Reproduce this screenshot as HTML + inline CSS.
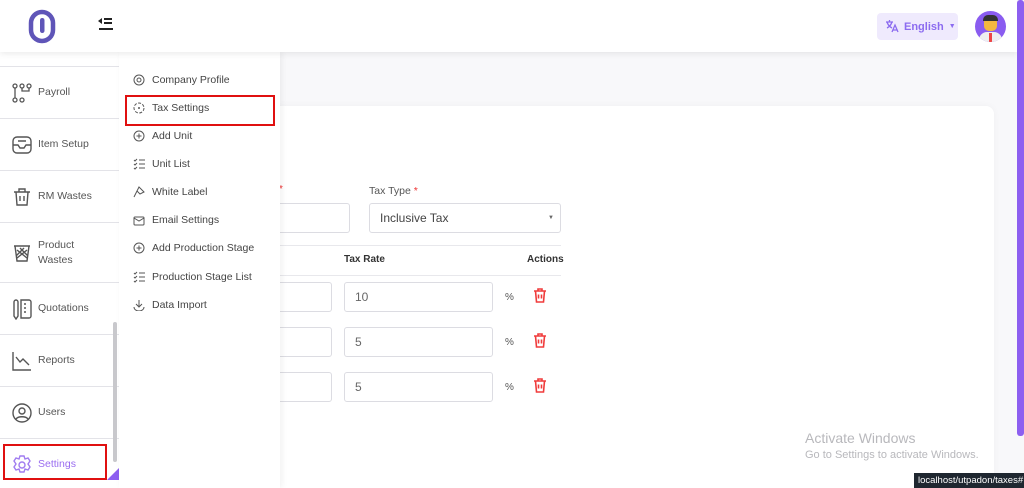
<!DOCTYPE html>
<html><head><meta charset="utf-8"><style>
*{box-sizing:border-box;margin:0;padding:0}
html{width:1024px;height:488px;overflow:hidden}
body{width:1024px;height:488px;overflow:hidden;background:#f8f8fa;font-family:"Liberation Sans",sans-serif;position:relative;color:#444}
.hdr{position:absolute;left:0;top:0;width:1017px;height:52px;background:#fff;box-shadow:0 2px 6px rgba(0,0,0,.08);z-index:5}
.side{position:absolute;left:0;top:52px;width:119px;height:436px;background:#fff;z-index:3}
.item{position:absolute;left:0;width:119px;border-top:1px solid #e3e3e8;font-size:10.5px;color:#555;display:flex;align-items:center}
.item svg{position:absolute;left:12px}
.item span{position:absolute;left:38px;line-height:15px}
.sub{position:absolute;left:119px;top:52px;width:161px;height:436px;background:#fff;box-shadow:2px 0 6px rgba(0,0,0,.06);z-index:4}
.si{position:absolute;left:14px;font-size:10.5px;color:#444;display:flex;align-items:center;gap:7px;white-space:nowrap}
.si svg{width:12px;height:12px}
.card{position:absolute;left:270px;top:106px;width:724px;height:382px;background:#fff;border-radius:8px 8px 0 0;box-shadow:0 0 8px rgba(0,0,0,.04)}
.inp{position:absolute;border:1px solid #dcdce2;border-radius:3px;background:#fff;font-size:12px;color:#666;padding-left:10px;display:flex;align-items:center}
.lbl{position:absolute;font-size:10.5px;color:#555}
.pct{position:absolute;left:505px;font-size:10px;color:#555}
.tr{position:absolute;left:533px}
</style></head><body>
<div class="hdr">
 <svg style="position:absolute;left:28px;top:9px" width="28" height="35" viewBox="0 0 28 35"><rect x="3" y="3" width="22" height="29" rx="11" fill="none" stroke="#5f55b8" stroke-width="4.5"/><rect x="12" y="9" width="4.5" height="15" rx="2.2" fill="#5f55b8"/></svg>
 <svg style="position:absolute;left:98px;top:17px" width="16" height="14" viewBox="0 0 16 14"><path d="M0 4l4-3v6z" fill="#222"/><path d="M6 2h8M6 6h8M1 12h14" stroke="#222" stroke-width="2"/></svg>
 <div style="position:absolute;left:877px;top:13px;width:81px;height:27px;background:#efeafd;border-radius:4px;color:#8c6cf0;font-size:11px;font-weight:bold;display:flex;align-items:center;padding-left:8px;gap:5px;white-space:nowrap"><svg width="14" height="13" viewBox="0 0 14 13" fill="none" stroke="#8c6cf0" stroke-width="1.3"><path d="M1 2h7M4.5 0v2M2 2c1 3 3 5 5 6M7 2c-1 3-3 5-5 6M7 12l3-7 3 7M8 10h4"/></svg>English <span style="font-size:7px">▼</span></div>
 <div style="position:absolute;left:975px;top:11px;width:31px;height:31px;border-radius:50%;background:#8a5cf0;overflow:hidden"><div style="position:absolute;left:9px;top:6px;width:13px;height:14px;border-radius:5px;background:#f4b840"></div><div style="position:absolute;left:8px;top:4px;width:15px;height:6px;border-radius:5px 5px 0 0;background:#333"></div><div style="position:absolute;left:4px;top:21px;width:23px;height:12px;border-radius:8px 8px 0 0;background:#eee"></div><div style="position:absolute;left:14px;top:22px;width:3px;height:9px;background:#e44"></div></div>
</div>
<div style="position:absolute;left:1017px;top:0;width:7px;height:436px;background:#8d5ff0;border-radius:3px;z-index:6"></div>
<div class="side">
 <div class="item" style="top:14px;height:52px"><svg width="20" height="20" viewBox="0 0 20 20" fill="none" stroke="#555" stroke-width="1.3"><circle cx="3" cy="3" r="2"/><circle cx="10" cy="3" r="2"/><circle cx="17" cy="3" r="2"/><path d="M3 5v10M10 5v3H17V5"/><circle cx="3" cy="17" r="2"/><circle cx="10" cy="17" r="2"/></svg><span>Payroll</span></div>
 <div class="item" style="top:66px;height:52px"><svg width="20" height="20" viewBox="0 0 20 20" fill="none" stroke="#555" stroke-width="1.4"><rect x="1" y="2" width="18" height="16" rx="4"/><path d="M1 10h5l2 3h4l2-3h5M6 6h8"/></svg><span>Item Setup</span></div>
 <div class="item" style="top:118px;height:52px"><svg width="20" height="20" viewBox="0 0 20 20" fill="none" stroke="#555" stroke-width="1.4"><path d="M2 5h16M7 5V2h6v3M4 5l1 13h10l1-13M8 9v5M12 9v5"/></svg><span>RM Wastes</span></div>
 <div class="item" style="top:170px;height:60px"><svg width="20" height="20" viewBox="0 0 20 20" fill="none" stroke="#555" stroke-width="1.4"><path d="M2 3h16M3 3l2 15h10l2-15M5 7l10 8M15 7L5 15M8 5l8 8M12 5l-8 8"/></svg><span>Product<br>Wastes</span></div>
 <div class="item" style="top:230px;height:52px"><svg width="20" height="22" viewBox="0 0 20 22" fill="none" stroke="#555" stroke-width="1.4"><path d="M2 4a2 2 0 014 0v14l-2 3-2-3zM9 2h8a2 2 0 012 2v14a2 2 0 01-2 2H9zM12 6h2M12 10h2M12 14h2"/></svg><span>Quotations</span></div>
 <div class="item" style="top:282px;height:52px"><svg width="20" height="20" viewBox="0 0 20 20" fill="none" stroke="#555" stroke-width="1.4"><path d="M1 1v18h18M4 6l4 5 3-3 6 6"/></svg><span>Reports</span></div>
 <div class="item" style="top:334px;height:52px"><svg width="20" height="20" viewBox="0 0 20 20" fill="none" stroke="#555" stroke-width="1.4"><circle cx="10" cy="10" r="9"/><circle cx="10" cy="8" r="3"/><path d="M4 16c2-3 10-3 12 0"/></svg><span>Users</span></div>
 <div class="item" style="top:386px;height:52px;color:#9a6cf0"><svg width="20" height="20" viewBox="0 0 20 20" fill="none" stroke="#a07cf0" stroke-width="1.4"><circle cx="10" cy="10" r="3"/><path d="M8 1h4l1 3 3-1 2 3-2 3 2 3-2 3-3-1-1 3H8l-1-3-3 1-2-3 2-3-2-3 2-3 3 1z"/></svg><span>Settings</span></div>
 <div style="position:absolute;left:3px;top:392px;width:104px;height:36px;border:2px solid #e01010"></div>
 <div style="position:absolute;left:113px;top:270px;width:4px;height:140px;background:#c8c8cc;border-radius:2px"></div>
 <div style="position:absolute;left:107px;top:416px;width:0;height:0;border-left:12px solid transparent;border-bottom:12px solid #8d5ff0"></div>
</div>
<div class="sub">
 <div class="si" style="top:22px"><svg viewBox="0 0 12 12" fill="none" stroke="#555"><circle cx="6" cy="6" r="5"/><circle cx="6" cy="6" r="2"/></svg>Company Profile</div>
 <div class="si" style="top:50px"><svg viewBox="0 0 12 12" fill="none" stroke="#555" stroke-dasharray="3 1.5"><circle cx="6" cy="6" r="5"/><circle cx="6" cy="6" r=".5"/></svg>Tax Settings</div>
 <div class="si" style="top:78px"><svg viewBox="0 0 12 12" fill="none" stroke="#555"><circle cx="6" cy="6" r="5"/><path d="M6 3.5v5M3.5 6h5"/></svg>Add Unit</div>
 <div class="si" style="top:106px"><svg viewBox="0 0 12 12" fill="none" stroke="#555"><path d="M1 2l1 1 2-2M1 6l1 1 2-2M1 10l1 1 2-2M6 2h6M6 6h6M6 10h6"/></svg>Unit List</div>
 <div class="si" style="top:134px"><svg viewBox="0 0 12 12" fill="none" stroke="#555"><path d="M6 1l5 5-4 2-3-3zM4 5L1 11"/></svg>White Label</div>
 <div class="si" style="top:162px"><svg viewBox="0 0 12 12" fill="none" stroke="#555"><rect x="1" y="3" width="10" height="8" rx="1"/><path d="M1 4l5 3 5-3"/></svg>Email Settings</div>
 <div class="si" style="top:190px"><svg viewBox="0 0 12 12" fill="none" stroke="#555"><circle cx="6" cy="6" r="5"/><path d="M6 3.5v5M3.5 6h5"/></svg>Add Production Stage</div>
 <div class="si" style="top:219px"><svg viewBox="0 0 12 12" fill="none" stroke="#555"><path d="M1 2l1 1 2-2M1 6l1 1 2-2M1 10l1 1 2-2M6 2h6M6 6h6M6 10h6"/></svg>Production Stage List</div>
 <div class="si" style="top:247px"><svg viewBox="0 0 12 12" fill="none" stroke="#555"><path d="M6 1v7M3 5l3 3 3-3M1 8a5 4 0 0010 0"/></svg>Data Import</div>
 <div style="position:absolute;left:6px;top:43px;width:150px;height:31px;border:2px solid #e01010"></div>
</div>
<div class="card"></div>
<div style="position:absolute;left:279px;top:184px;color:#e33;font-size:10px">*</div>
<div class="lbl" style="left:369px;top:185px">Tax Type <span style="color:#e33">*</span></div>
<div class="inp" style="left:260px;top:203px;width:90px;height:30px"></div>
<div class="inp" style="left:369px;top:203px;width:192px;height:30px;color:#444">Inclusive Tax<span style="position:absolute;right:6px;font-size:6px;color:#666">▼</span></div>
<div style="position:absolute;left:280px;top:245px;width:281px;height:1px;background:#e8e8ec"></div>
<div class="lbl" style="left:344px;top:254px;font-weight:bold;color:#333;font-size:10px">Tax Rate</div>
<div class="lbl" style="left:527px;top:254px;font-weight:bold;color:#333;font-size:10px">Actions</div>
<div style="position:absolute;left:280px;top:275px;width:281px;height:1px;background:#e8e8ec"></div>
<div class="inp" style="left:260px;top:282px;width:72px;height:30px"></div>
<div class="inp" style="left:344px;top:282px;width:149px;height:30px">10</div>
<div class="pct" style="top:292px">%</div>
<div class="inp" style="left:260px;top:327px;width:72px;height:30px"></div>
<div class="inp" style="left:344px;top:327px;width:149px;height:30px">5</div>
<div class="pct" style="top:337px">%</div>
<div class="inp" style="left:260px;top:372px;width:72px;height:30px"></div>
<div class="inp" style="left:344px;top:372px;width:149px;height:30px">5</div>
<div class="pct" style="top:382px">%</div>
<svg class="tr" style="top:288px" width="14" height="15" viewBox="0 0 14 15" fill="none" stroke="#f03c3c" stroke-width="1.6"><path d="M1 3h12M5 3V1h4v2M2.5 3l1 11h7l1-11M5.5 6.5v4M8.5 6.5v4"/></svg>
<svg class="tr" style="top:333px" width="14" height="15" viewBox="0 0 14 15" fill="none" stroke="#f03c3c" stroke-width="1.6"><path d="M1 3h12M5 3V1h4v2M2.5 3l1 11h7l1-11M5.5 6.5v4M8.5 6.5v4"/></svg>
<svg class="tr" style="top:378px" width="14" height="15" viewBox="0 0 14 15" fill="none" stroke="#f03c3c" stroke-width="1.6"><path d="M1 3h12M5 3V1h4v2M2.5 3l1 11h7l1-11M5.5 6.5v4M8.5 6.5v4"/></svg>
<div style="position:absolute;left:805px;top:430px;font-size:14px;color:#b8b8bc">Activate Windows</div>
<div style="position:absolute;left:805px;top:449px;font-size:11px;color:#b8b8bc">Go to Settings to activate Windows.</div>
<div style="position:absolute;left:914px;top:473px;width:110px;height:15px;background:#1f2730;color:#fff;font-size:9.5px;padding:2px 0 0 4px;z-index:7;white-space:nowrap">localhost/utpadon/taxes#</div>
</body></html>
